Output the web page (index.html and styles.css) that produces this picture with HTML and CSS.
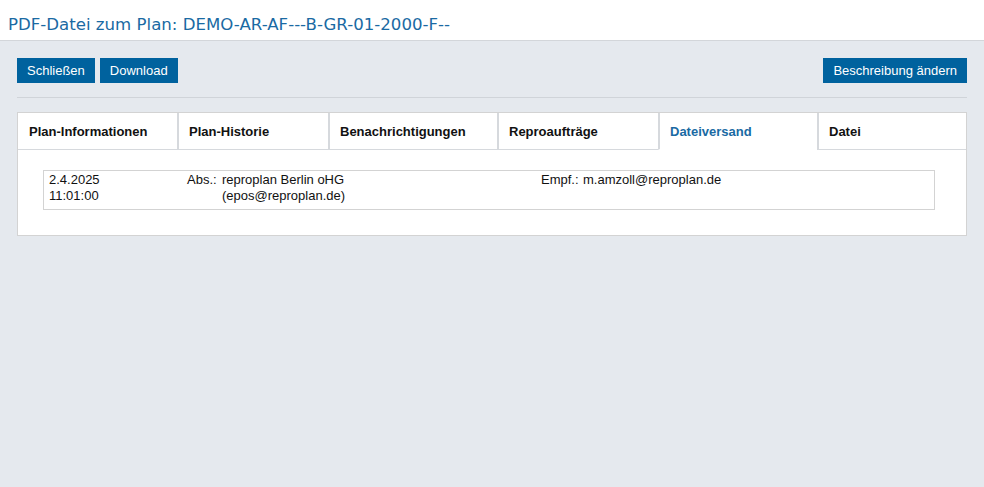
FILE: index.html
```html
<!DOCTYPE html>
<html lang="de">
<head>
<meta charset="utf-8">
<title>PDF-Datei zum Plan</title>
<link rel="stylesheet" href="styles.css">
</head>
<body>
<header class="page-header">
  <h1 class="page-title">PDF-Datei zum Plan: DEMO-AR-AF---B-GR-01-2000-F--</h1>
</header>
<main class="page-main">
  <div class="toolbar">
    <div class="toolbar-left">
      <button class="btn">Schließen</button>
      <button class="btn">Download</button>
    </div>
    <button class="btn">Beschreibung ändern</button>
  </div>
  <div class="divider"></div>
  <section class="tabpanel">
    <nav class="tabs">
      <div class="tab">Plan-Informationen</div>
      <div class="tab">Plan-Historie</div>
      <div class="tab">Benachrichtigungen</div>
      <div class="tab">Reproaufträge</div>
      <div class="tab tab-active">Dateiversand</div>
      <div class="tab">Datei</div>
    </nav>
    <div class="tab-content">
      <div class="entry">
        <div class="entry-date">2.4.2025<br>11:01:00</div>
        <div class="entry-label">Abs.:</div>
        <div class="entry-from">reproplan Berlin oHG<br>(epos@reproplan.de)</div>
        <div class="entry-label">Empf.:</div>
        <div class="entry-to">m.amzoll@reproplan.de</div>
      </div>
    </div>
  </section>
</main>
</body>
</html>
```

FILE: styles.css
```css
html, body {
  margin: 0;
  padding: 0;
}
body {
  background: #e5e9ee;
  font-family: "Liberation Sans", Arial, sans-serif;
  color: #111;
  min-height: 487px;
}
.page-header {
  background: #fff;
  height: 41px;
  border-bottom: 1px solid #d3d6da;
  box-sizing: border-box;
  padding: 15px 8px 0 8px;
}
.page-title {
  margin: 0;
  font-family: "DejaVu Sans", Verdana, sans-serif;
  font-weight: normal;
  font-size: 16.6px;
  line-height: normal;
  color: #1a6aa3;
}
.page-main {
  padding: 17px 17px 0 17px;
}
.toolbar {
  display: flex;
  justify-content: space-between;
  align-items: center;
}
.toolbar-left {
  display: flex;
  gap: 5px;
}
.btn {
  background: #00629e;
  color: #fff;
  border: 0;
  height: 25px;
  padding: 0 10px;
  font-family: "Liberation Sans", Arial, sans-serif;
  font-size: 13px;
  cursor: pointer;
}
.divider {
  height: 1px;
  background: #d0d4d9;
  margin: 14px 0 14px 0;
}
.tabpanel {
  background: #fff;
  border: 1px solid #d3d3d3;
}
.tabs {
  display: grid;
  grid-template-columns: 159px 151px 169px 161px 159px 1fr;
  height: 37px;
}
.tab {
  display: flex;
  align-items: center;
  padding-left: 10px;
  font-weight: bold;
  font-size: 13px;
  color: #111;
  border-left: 2px solid #d6d9dd;
  border-bottom: 1px solid #d6d9dd;
}
.tab:first-child {
  border-left: 0;
  padding-left: 11px;
}
.tab-active {
  color: #1a6aa3;
  border-bottom-color: transparent;
}
.tab-content {
  padding: 20px 31px 25px 25px;
}
.entry {
  box-sizing: border-box;
  border: 1px solid #d3d3d3;
  height: 40px;
  display: grid;
  grid-template-columns: 138px 35px 319px 42px 1fr;
  font-size: 13px;
  line-height: 16px;
  padding: 1px 0 0 5px;
}
```
